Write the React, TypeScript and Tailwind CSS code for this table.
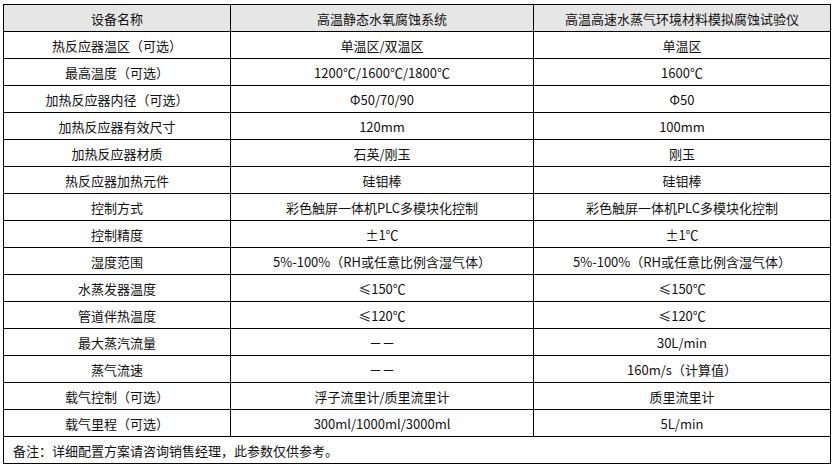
import React from "react";

const rows: [string, string, string][] = [
  ["热反应器温区（可选）", "单温区/双温区", "单温区"],
  ["最高温度（可选）", "1200℃/1600℃/1800℃", "1600℃"],
  ["加热反应器内径（可选）", "Φ50/70/90", "Φ50"],
  ["加热反应器有效尺寸", "120mm", "100mm"],
  ["加热反应器材质", "石英/刚玉", "刚玉"],
  ["热反应器加热元件", "硅钼棒", "硅钼棒"],
  ["控制方式", "彩色触屏一体机PLC多模块化控制", "彩色触屏一体机PLC多模块化控制"],
  ["控制精度", "±1℃", "±1℃"],
  ["湿度范围", "5%-100%（RH或任意比例含湿气体）", "5%-100%（RH或任意比例含湿气体）"],
  ["水蒸发器温度", "≤150℃", "≤150℃"],
  ["管道伴热温度", "≤120℃", "≤120℃"],
  ["最大蒸汽流量", "－－", "30L/min"],
  ["蒸气流速", "－－", "160m/s（计算值）"],
  ["载气控制（可选）", "浮子流里计/质里流里计", "质里流里计"],
  ["载气里程（可选）", "300ml/1000ml/3000ml", "5L/min"],
];

const cell = "h-[27px] border border-black p-0 text-center align-middle";

export default function App() {
  return (
    <div
      className="w-[834px] h-[467px] bg-white pl-[3px] pt-[4px] text-[13px] text-[#111]"
      style={{ fontFamily: '"Noto Sans CJK SC", "Noto Sans", sans-serif' }}
    >
      <table className="table-fixed border-collapse w-[827px] leading-none">
        <colgroup>
          <col className="w-[227px]" />
          <col className="w-[303px]" />
          <col className="w-[297px]" />
        </colgroup>
        <tbody>
          <tr className="bg-[#e6e6e6]">
            <td className={cell}>设备名称</td>
            <td className={cell}>高温静态水氧腐蚀系统</td>
            <td className={cell}>高温高速水蒸气环境材料模拟腐蚀试验仪</td>
          </tr>
          {rows.map((r, i) => (
            <tr key={i}>
              <td className={cell}>{r[0]}</td>
              <td className={cell}>{r[1]}</td>
              <td className={cell}>{r[2]}</td>
            </tr>
          ))}
          <tr>
            <td colSpan={3} className="h-[27px] border border-black p-0 pl-[9px] text-left align-middle">
              备注：详细配置方案请咨询销售经理，此参数仅供参考。
            </td>
          </tr>
        </tbody>
      </table>
    </div>
  );
}
